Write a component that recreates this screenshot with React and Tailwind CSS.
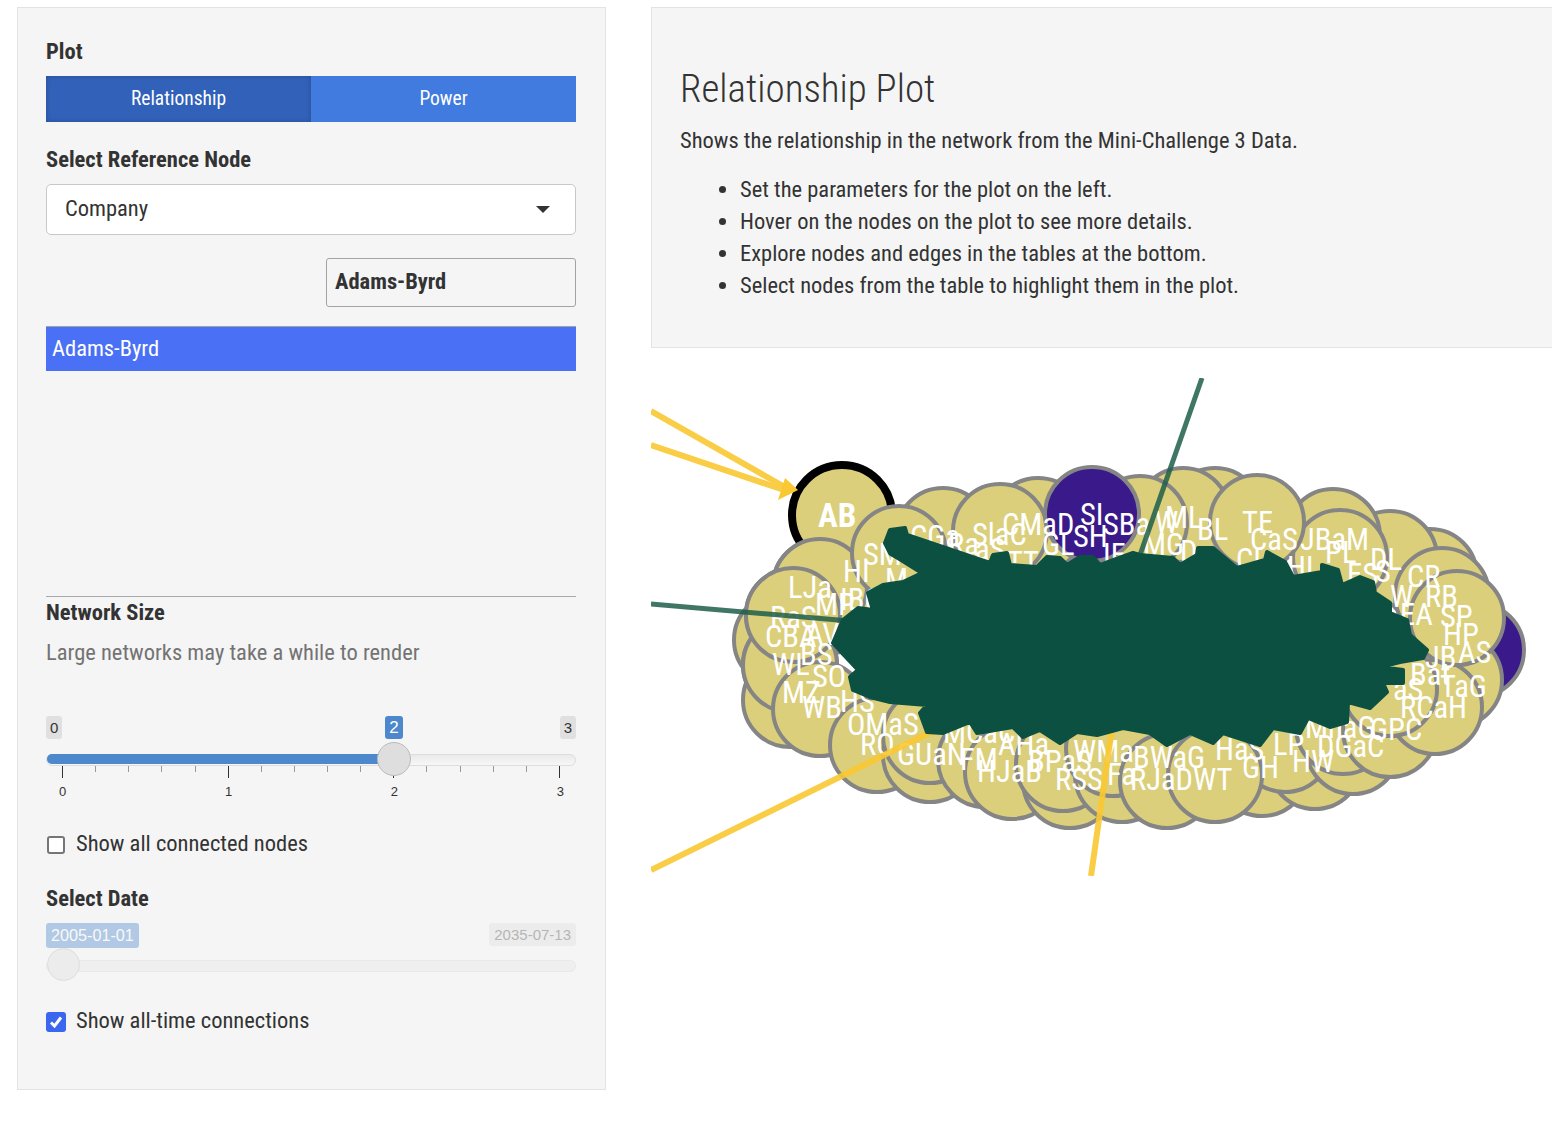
const circles = [
  [1477,650,'p'],[781,640],[790,665],[820,586],[830,606],[790,700],[793,615],[790,665],[820,709],
  [877,745],[930,755],[930,736],[985,760],[1012,772],[1070,781],[1063,764],[1122,775],[1113,749],
  [1167,781],[1262,769],[1315,762],[1285,745],[1353,747],[1343,727],[1215,775],[1390,730],[1455,680],[1435,707],[1390,689],
  [943,535],[1038,525],[1000,531],[1215,515],[1183,515],[1140,523],[1092,514,'p'],[1430,576],[1390,558],[1333,536],[1340,557],[1257,522],[1442,595],[1457,618],
];
const labels = [
  ['SM',863,565],['HI',843,582],['M',885,590],['LJa',788,598],['IBC',840,610],['MP',815,615],['RaS',770,628],['CBA',765,647],['AV',806,645],
  ['CGa',910,547],['Ra',948,555],['SlaC',972,545],['CMaD',1002,535],['aS',975,560],['TT',1007,573],['GL',1042,555],['SI',1080,525],['SBa',1103,535],['SH',1073,547],['IF',1103,565],
  ['W',1155,533],['ML',1165,528],['BL',1197,540],['TE',1242,533],['CaS',1250,550],['JBaM',1300,550],['PL',1325,563],['DL',1370,570],['MG',1143,555],['D',1180,562],['CI',1236,570],['HL',1287,578],
  ['CR',1407,587],['RB',1425,607],['SP',1440,627],['HP',1443,645],['ES',1347,585],['S',1375,582],['W',1390,607],['EA',1400,625],
  ['WL',772,675],['BS',800,665],['SO',812,687],['MZ',782,703],['WB',802,718],['HS',840,712],['OMaS',847,735],['RO',860,755],['GUaN',897,765],['MCaC',943,743],['FM',960,770],['HJaB',977,782],['AHa',998,755],['BPaS',1028,772],['RSS',1055,790],['Fa',1107,785],['WMa',1073,762],
  ['BWaG',1133,768],['HaS',1215,760],['RJaDWT',1130,790],['GH',1242,778],['LP',1273,755],['HW',1292,772],['MhaG',1305,738],['DGaC',1317,757],['GPC',1370,740],['RCaH',1400,718],['JB',1425,668],['AS',1458,663],['Bat',1410,685],['TaG',1440,697],['aS',1393,700],
];
const blob = "885,543 890,530 905,528 907,535 990,563 993,555 1007,553 1010,565 1037,567 1047,557 1060,558 1067,565 1080,557 1093,557 1100,565 1133,553 1140,555 1173,558 1180,565 1197,555 1198,548 1213,548 1237,568 1265,560 1267,552 1285,562 1293,577 1322,572 1322,565 1338,570 1342,585 1360,577 1373,582 1375,593 1390,603 1390,613 1407,620 1410,635 1427,650 1423,658 1400,662 1380,667 1403,670 1403,683 1383,683 1387,692 1370,708 1348,702 1347,722 1330,727 1308,718 1300,733 1273,728 1260,745 1223,733 1213,743 1190,733 1167,745 1150,733 1123,728 1097,735 1077,732 1060,743 1040,730 1023,737 1013,727 977,733 970,722 943,733 927,732 920,713 927,705 890,702 870,697 853,690 850,677 858,670 842,653 833,643 843,620 858,608 873,610 868,593 883,585 903,582 922,573 890,553";

function Network() {
  return (
    <svg viewBox="651 378 901 498" className="block w-[901px] h-[498px]" style={{ fontFamily: 'Roboto, sans-serif' }}>
      {circles.map(([x, y, k], i) => (
        <circle key={i} cx={x} cy={y} r="47" fill={k ? '#3a1a8a' : '#dbcf7b'} stroke="#858585" strokeWidth="4" />
      ))}
      <circle cx="842" cy="515" r="50" fill="#dbcf7b" stroke="#000" strokeWidth="8" />
      {[[820,586],[793,615],[899,553]].map(([x, y], i) => (
        <circle key={i} cx={x} cy={y} r="47" fill="#dbcf7b" stroke="#858585" strokeWidth="4" />
      ))}
      <text x="818" y="527" fontSize="33" fontWeight="700" fill="#fff">AB</text>
      {labels.map(([t, x, y], i) => (
        <text key={i} x={x} y={y} fontSize="30.5" fill="#fff">{t}</text>
      ))}
      <g opacity=".9" strokeWidth="6" stroke="#fac832" fill="none">
        <line x1="651" y1="411" x2="790" y2="490" />
        <line x1="651" y1="445" x2="790" y2="492" />
        <line x1="651" y1="870" x2="935" y2="730" />
        <line x1="1091" y1="876" x2="1112" y2="728" />
      </g>
      <polygon points="798,490 785,478 778,500" fill="#fac832" />
      <g opacity=".85" strokeWidth="5" stroke="#1f5e4a" fill="none">
        <line x1="1202" y1="378" x2="1140" y2="555" />
        <line x1="651" y1="604" x2="850" y2="621" />
        <line x1="890" y1="553" x2="942" y2="580" />
      </g>
      <polygon points={blob} fill="#0b5040" stroke="#0b5040" strokeWidth="4" strokeLinejoin="round" />
    </svg>
  );
}

function Ticks() {
  const ticks = Array.from({ length: 16 }, (_, i) => i);
  return (
    <div className="flex justify-between items-start px-[16px] h-[12px]">
      {ticks.map(i => (
        <div key={i} className={i % 5 === 0 ? 'w-px h-[12px] bg-[#333]' : 'w-px h-[6px] bg-[#999]'} />
      ))}
    </div>
  );
}

const tag = 'text-[15px] leading-[23px] px-[4px] rounded-[3px] bg-[#e0e0e0] text-[#333] font-["Liberation_Sans",sans-serif]';
const label = 'font-bold text-[#333] text-[22.5px] leading-[26px]';

export default function App() {
  return (
    <div className='h-[1132px] overflow-hidden bg-white flex items-start pl-[17px] pt-[7px] gap-[45px] font-["Roboto",sans-serif] [font-stretch:75%] text-[#333]'>
      <div className="w-[589px] h-[1083px] shrink-0 bg-[#f5f5f5] border border-[#e3e3e3] pl-[28px] pr-[29px] pt-[30px]">
        <div className={label}>Plot</div>
        <div className="flex h-[46px] mt-[12px] text-white text-[19.5px]">
          <div className="flex-1 flex items-center justify-center bg-[#3161b8] shadow-[inset_0_0_5px_rgba(0,0,0,0.2)]">Relationship</div>
          <div className="flex-1 flex items-center justify-center bg-[#417be0]">Power</div>
        </div>
        <div className={`${label} mt-[24px]`}>Select Reference Node</div>
        <div className="mt-[12px] h-[51px] bg-white border border-[#c8c8c8] rounded-[5px] flex items-center justify-between pl-[18px] pr-[25px] text-[22.5px]">
          <span className="mt-[-1px]">Company</span>
          <div className="w-0 h-0 border-x-[7px] border-x-transparent border-t-[7px] border-t-[#333]" />
        </div>
        <div className="mt-[23px] ml-[280px] h-[49px] border border-[#a3a3a3] rounded-[3px] flex items-center pl-[8px] font-bold text-[22.5px]"><span className="mt-[-1px]">Adams-Byrd</span></div>
        <div className="mt-[19px] h-[45px] bg-[#4a70f5] border-t border-[#a3a3a3] flex items-center pl-[6px] text-white text-[22.5px]"><span className="mt-[-1px]">Adams-Byrd</span></div>
        <div className="mt-[225px] border-t border-[#aaa]" />
        <div className={`${label} mt-[2px]`}>Network Size</div>
        <div className="mt-[14px] text-[22.5px] leading-[26px] text-[#737373]">Large networks may take a while to render</div>
        <div className="mt-[51px] flex items-start h-[23px]">
          <span className={tag}>0</span>
          <span className={`${tag} !bg-[#4c88cb] !text-white ml-[323px] !text-[17px] !px-[4px]`}>2</span>
          <span className={`${tag} ml-auto`}>3</span>
        </div>
        <div className="relative mt-[15px] h-[12px] rounded-full bg-gradient-to-b from-[#eaeaea] to-[#f7f7f7] border border-[#ddd]">
          <div className="h-full w-[348px] rounded-l-full bg-[#4c88cb] mt-[-1px] border-y border-[#4c88cb]" />
          <div className="absolute left-[330px] top-[-13px] w-[34px] h-[34px] rounded-full bg-[#dedede] border border-[#bbb]" />
        </div>
        <Ticks />
        <div className='flex justify-between pl-[13px] pr-[12px] mt-[6px] text-[13px] leading-[15px] font-["Liberation_Sans",sans-serif]'>
          <span>0</span><span>1</span><span>2</span><span>3</span>
        </div>
        <div className="mt-[31px] flex items-center gap-[11px] text-[22.5px] leading-[28px]">
          <div className="ml-[1px] w-[18px] h-[18px] mt-[1px] rounded-[3px] border-2 border-[#767676] bg-white" />
          <span className="leading-[26px] mb-[2px]">Show all connected nodes</span>
        </div>
        <div className={`${label} mt-[27px]`}>Select Date</div>
        <div className="mt-[12px] flex justify-between items-start h-[25px] opacity-40 font-['Liberation_Sans',sans-serif]">
          <span className="px-[5px] text-[16.2px] leading-[25px] rounded-[3px] bg-[#4c88cb] text-white">2005-01-01</span>
          <span className="px-[5px] text-[15px] leading-[23px] rounded-[3px] bg-[#e0e0e0] text-[#555]">2035-07-13</span>
        </div>
        <div className="relative mt-[12px] h-[12px] rounded-full bg-[#efefef] border border-[#e8e8e8]">
          <div className="absolute left-0 top-[-13px] w-[33px] h-[33px] rounded-full bg-[#ececec] border border-[#ddd]" />
        </div>
        <div className="mt-[35px] flex items-center gap-[10px] text-[22.5px] leading-[28px]">
          <div className="w-[20px] h-[20px] mt-[1px] rounded-[3px] bg-[#3a66f0] flex items-center justify-center">
            <svg viewBox="0 0 16 16" className="w-[16px] h-[16px]" fill="none" stroke="#fff" strokeWidth="3"><path d="M3 8.5 6.5 12 13 3.5" /></svg>
          </div>
          <span className="leading-[26px] mb-[2px]">Show all-time connections</span>
        </div>
      </div>
      <div className="flex-1 min-w-0">
        <div className="h-[341px] bg-[#f5f5f5] border border-r-0 border-[#e3e3e3] pl-[28px] pt-[55px]">
          <div className="text-[39px] leading-[52px] font-light">Relationship Plot</div>
          <div className="mt-[12px] text-[22.5px] leading-[26px]">Shows the relationship in the network from the Mini-Challenge 3 Data.</div>
          <ul className="mt-[20px] list-disc pl-[60px] text-[22.5px] leading-[32px]">
            <li>Set the parameters for the plot on the left.</li>
            <li>Hover on the nodes on the plot to see more details.</li>
            <li>Explore nodes and edges in the tables at the bottom.</li>
            <li>Select nodes from the table to highlight them in the plot.</li>
          </ul>
        </div>
        <div className="mt-[30px]"><Network /></div>
      </div>
    </div>
  );
}
